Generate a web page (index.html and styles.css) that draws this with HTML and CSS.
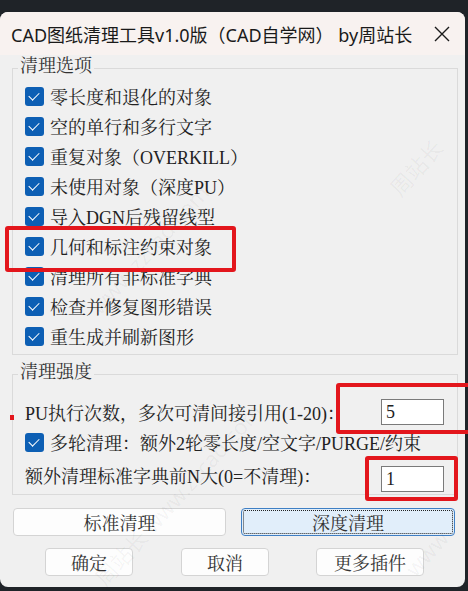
FILE: index.html
```html
<!DOCTYPE html>
<html lang="zh-CN">
<head>
    <meta charset="UTF-8">
    <meta name="viewport" content="width=device-width, initial-scale=1.0">
    <title>CAD图纸清理工具</title>
    <link rel="stylesheet" href="styles.css">
</head>
<body>
    <div class="desk">
        <div class="win">
            <div class="titlebar">
                <span class="title">CAD图纸清理工具v1.0版（CAD自学网） by周站长</span>
                <svg class="close" width="16" height="16" viewBox="0 0 16 16">
                    <path d="M1 1 L15 15 M15 1 L1 15" stroke="#1a1a1a" stroke-width="1.4" fill="none"/>
                </svg>
            </div>

            <div class="content">
                <fieldset class="group opts">
                    <legend>清理选项</legend>
                    <label class="chk"><span class="box"></span>零长度和退化的对象</label>
                    <label class="chk"><span class="box"></span>空的单行和多行文字</label>
                    <label class="chk"><span class="box"></span>重复对象（OVERKILL）</label>
                    <label class="chk"><span class="box"></span>未使用对象（深度PU）</label>
                    <label class="chk"><span class="box"></span>导入DGN后残留线型</label>
                    <label class="chk"><span class="box"></span>几何和标注约束对象</label>
                    <label class="chk"><span class="box"></span>清理所有非标准字典</label>
                    <label class="chk"><span class="box"></span>检查并修复图形错误</label>
                    <label class="chk"><span class="box"></span>重生成并刷新图形</label>
                </fieldset>

                <fieldset class="group level">
                    <legend>清理强度</legend>
                    <div class="row">
                        <span>PU执行次数，多次可清间接引用(1-20)：</span>
                        <span class="input">5</span>
                    </div>
                    <label class="chk"><span class="box"></span>多轮清理：额外2轮零长度/空文字/PURGE/约束</label>
                    <div class="row last">
                        <span>额外清理标准字典前N大(0=不清理)：</span>
                        <span class="input">1</span>
                    </div>
                </fieldset>

                <div class="btns main">
                    <button>标准清理</button>
                    <button class="focus">深度清理</button>
                </div>
                <div class="btns foot">
                    <button class="ok">确定</button>
                    <button class="cancel">取消</button>
                    <button class="more">更多插件</button>
                </div>
            </div>
        </div>

        <!-- faint site watermark -->
        <span class="wm w1">www.zzcad.com</span>
        <span class="wm w2">周站长</span>
        <span class="wm w3">周站长 www.zzcad.com</span>
        <span class="wm w4">www</span>

        <!-- annotations drawn over the dialog -->
        <div class="mark m1"></div>
        <div class="mark m2"></div>
        <div class="mark m3"></div>
        <div class="dot"></div>
    </div>
</body>
</html>
```

FILE: styles.css
```css
body {
    margin: 0;
    background-color: #1f2328;
    font-family: "Liberation Serif", "Noto Serif CJK SC", "Noto Sans CJK SC", serif;
    color: #222;
}
.desk {
    position: relative;
    width: 468px;
    height: 591px;
    padding-top: 12px;
    box-sizing: border-box;
    overflow: hidden;
}
.win {
    width: 465px;
    height: 575px;
    background-color: #f0f0f0;
    border-radius: 8px;
    overflow: hidden;
    display: flex;
    flex-direction: column;
}
.titlebar {
    height: 43px;
    flex: none;
    display: flex;
    align-items: center;
    justify-content: space-between;
    padding: 0 15px 0 11px;
    background-color: #f8f2f0;
    font-family: "Noto Sans", "Noto Sans CJK SC", sans-serif;
    font-size: 18px;
    color: #1a1a1a;
}
.close {
    display: block;
}
.content {
    flex: 1;
    display: flex;
    flex-direction: column;
}
.group {
    margin: 0 7px 0 12px;
    border: 1px solid #dadada;
    padding: 0 12px 3px 12px;
    min-width: 0;
}
.group legend {
    font-size: 18px;
    line-height: 22px;
    padding: 0 2px 4px 2px;
    margin-left: -7px;
    color: #333;
}
.level {
    margin-top: 6px;
    padding-top: 10px;
    padding-bottom: 1px;
}
.chk {
    display: flex;
    align-items: center;
    height: 30px;
    font-size: 18px;
    white-space: nowrap;
}
.box {
    width: 19px;
    height: 19px;
    margin-right: 6px;
    border-radius: 3px;
    background-color: #0d5fb4;
    flex: none;
    position: relative;
}
.box::after {
    content: "";
    position: absolute;
    left: 6px;
    top: 3px;
    width: 5px;
    height: 9px;
    border-right: 1.2px solid #fff;
    border-bottom: 1.2px solid #fff;
    transform: rotate(45deg);
}
.row {
    display: flex;
    align-items: center;
    justify-content: space-between;
    height: 30px;
    font-size: 18px;
    white-space: nowrap;
}
.row.last {
    height: 36px;
}
.row.last .input {
    margin-top: 8px;
}
.input {
    width: 63px;
    height: 26px;
    box-sizing: border-box;
    border: 1px solid #7a7a7a;
    background-color: #fff;
    padding-left: 4px;
    font-size: 18px;
    line-height: 24px;
    margin-right: 1px;
}
.btns {
    display: flex;
}
.btns button {
    height: 28px;
    padding: 0;
    border: 1px solid #d4d4d4;
    border-radius: 4px;
    background-color: #fdfdfd;
    font-family: inherit;
    font-size: 18px;
    color: #333;
}
.main {
    margin-top: 13px;
    padding-left: 13px;
    gap: 15px;
}
.main button {
    width: 213px;
}
.main .focus {
    width: 214px;
    background-color: #e1eefa;
    border-color: #3f7fc4;
    outline: 1px dotted #222;
    outline-offset: -3px;
}
.foot {
    margin-top: 12px;
    padding-left: 45px;
}
.foot .ok,
.foot .cancel {
    width: 88px;
}
.foot .cancel {
    margin-left: 48px;
}
.foot .more {
    width: 108px;
    margin-left: 47px;
}
.wm {
    position: absolute;
    font-family: "Noto Sans", "Noto Sans CJK SC", sans-serif;
    font-size: 22px;
    color: rgba(0, 0, 0, 0.045);
    white-space: nowrap;
    transform: rotate(-48deg);
    transform-origin: left bottom;
    pointer-events: none;
}
.w1 {
    left: 105px;
    top: 290px;
}
.w2 {
    left: 405px;
    top: 170px;
}
.w3 {
    left: 110px;
    top: 560px;
}
.w4 {
    left: 420px;
    top: 552px;
}
.mark {
    position: absolute;
    border: 4px solid #e3161c;
    border-radius: 3px;
}
.m1 {
    left: 5px;
    top: 226px;
    width: 223px;
    height: 38px;
}
.m2 {
    left: 336px;
    top: 383px;
    width: 140px;
    height: 43px;
}
.m3 {
    left: 365px;
    top: 456px;
    width: 85px;
    height: 37px;
}
.dot {
    position: absolute;
    left: 10px;
    top: 415px;
    width: 4px;
    height: 5px;
    background-color: #e3161c;
}
```
